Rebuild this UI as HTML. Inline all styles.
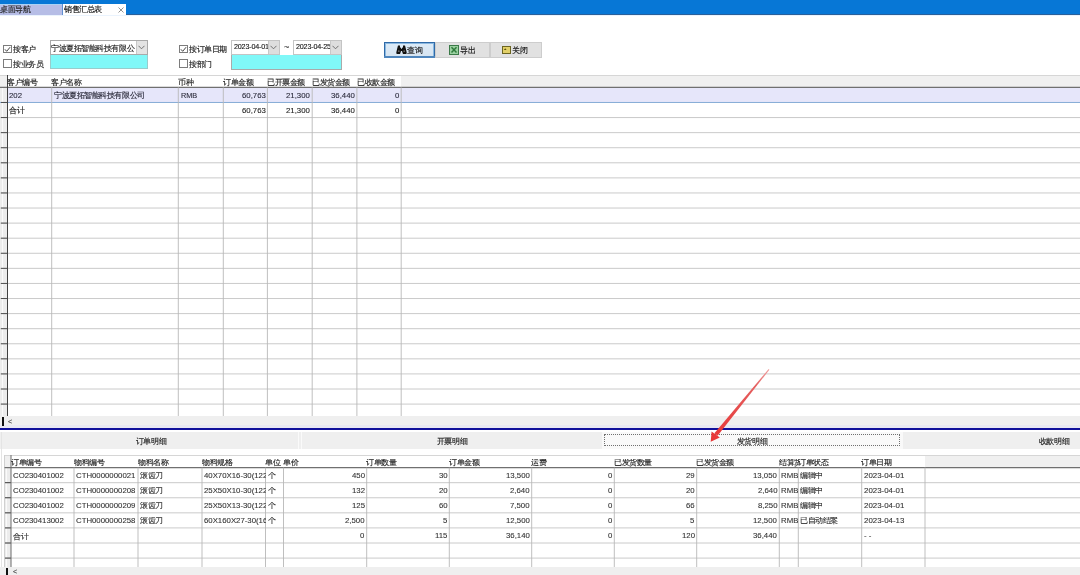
<!DOCTYPE html><html><head><meta charset="utf-8"><style>
html,body{margin:0;padding:0;width:1080px;height:575px;overflow:hidden;background:#fff;position:relative}
body{font-family:"Liberation Sans",sans-serif;color:#222}
div,span,svg{position:absolute}
.t{white-space:nowrap;line-height:1;will-change:transform;-webkit-text-stroke:0.15px currentColor}
.c{font-size:8px;letter-spacing:-0.45px}
.l{font-size:7.8px;-webkit-text-stroke:0.1px currentColor}
</style></head><body>
<div style="left:0px;top:0px;width:1080px;height:15px;background:#0777d6"></div>
<div style="left:0px;top:14px;width:1080px;height:1px;background:#2a609a"></div>
<div style="left:0px;top:15px;width:1080px;height:1px;background:#eaf3fd"></div>
<div style="left:0px;top:3.5px;width:62px;height:11px;background:#b6bde6"></div>
<div style="left:0px;top:3.5px;width:62px;height:1px;background:#a9d2f5"></div>
<div style="left:62px;top:3.5px;width:1px;height:11px;background:#5f8fd0"></div>
<span class="t c" style="left:-0.5px;top:6.40px;color:#222">桌面导航</span>
<div style="left:63px;top:3.5px;width:63px;height:11px;background:#fff"></div>
<span class="t c" style="left:64px;top:6.40px;color:#111">销售汇总表</span>
<svg style="position:absolute;left:118px;top:6.5px" width="6" height="6"><path d="M0.5 0.5 L5.5 5.5 M5.5 0.5 L0.5 5.5" stroke="#777" stroke-width="0.8"/></svg>
<div style="left:3.3px;top:44.8px;width:6.5px;height:6.5px;border:1px solid #7c7c7c;background:#fff"></div>
<svg style="position:absolute;left:3.3px;top:44.8px" width="9" height="9"><path d="M1.9 4.3 L3.7 6.3 L7.1 2.2" stroke="#444" stroke-width="1" fill="none"/></svg>
<span class="t c" style="left:12.5px;top:45.90px;">按客户</span>
<div style="left:3.3px;top:59.3px;width:6.5px;height:6.5px;border:1px solid #7c7c7c;background:#fff"></div>
<span class="t c" style="left:12.5px;top:60.50px;">按业务员</span>
<div style="left:50px;top:40px;width:98px;height:15px;background:#fff;border:1px solid #a9a9a9;box-sizing:border-box"></div>
<span class="t c" style="left:50.8px;top:44.55px;">宁波夏拓智能科技有限公</span>
<div style="left:136px;top:41px;width:11px;height:13px;background:#e3e3e3;border-left:1px solid #c8c8c8;box-sizing:border-box"></div>
<svg style="position:absolute;left:138px;top:45px" width="7" height="5"><path d="M0.5 0.8 L3.5 3.8 L6.5 0.8" stroke="#666" stroke-width="0.9" fill="none"/></svg>
<div style="left:50px;top:55px;width:98px;height:14px;background:#80f8f8;border:1px solid #9cc;border-top:none;box-sizing:border-box"></div>
<div style="left:179.3px;top:44.8px;width:6.5px;height:6.5px;border:1px solid #7c7c7c;background:#fff"></div>
<svg style="position:absolute;left:179.3px;top:44.8px" width="9" height="9"><path d="M1.9 4.3 L3.7 6.3 L7.1 2.2" stroke="#444" stroke-width="1" fill="none"/></svg>
<span class="t c" style="left:189px;top:45.90px;">按订单日期</span>
<div style="left:179.3px;top:59.3px;width:6.5px;height:6.5px;border:1px solid #7c7c7c;background:#fff"></div>
<span class="t c" style="left:189px;top:60.50px;">按部门</span>
<div style="left:230.5px;top:40px;width:49px;height:15px;background:#fff;border:1px solid #c4c4c4;box-sizing:border-box"></div>
<span class="t l" style="left:233.5px;top:43.40px;font-size:7.2px;color:#111;letter-spacing:-0.2px">2023-04-01</span>
<div style="left:267.5px;top:41px;width:11px;height:13px;background:#dedede;border-left:1px solid #c8c8c8;box-sizing:border-box"></div>
<svg style="position:absolute;left:269.5px;top:45px" width="7" height="5"><path d="M0.5 0.8 L3.5 3.8 L6.5 0.8" stroke="#666" stroke-width="0.9" fill="none"/></svg>
<span class="t l" style="left:283.5px;top:42.90px;font-size:9px;color:#333">~</span>
<div style="left:292.5px;top:40px;width:49px;height:15px;background:#fff;border:1px solid #c4c4c4;box-sizing:border-box"></div>
<span class="t l" style="left:295.5px;top:43.40px;font-size:7.2px;color:#111;letter-spacing:-0.2px">2023-04-25</span>
<div style="left:329.5px;top:41px;width:11px;height:13px;background:#dedede;border-left:1px solid #c8c8c8;box-sizing:border-box"></div>
<svg style="position:absolute;left:331.5px;top:45px" width="7" height="5"><path d="M0.5 0.8 L3.5 3.8 L6.5 0.8" stroke="#666" stroke-width="0.9" fill="none"/></svg>
<div style="left:230.5px;top:55px;width:111px;height:15px;background:#80f8f8;border:1px solid #aaa;border-top:none;box-sizing:border-box"></div>
<div style="left:384px;top:42px;width:51px;height:16px;background:linear-gradient(#dcebf8,#d6e4f0);border:1px solid #2f6aa8;box-shadow:inset 0 0 0 1px #8ab8e0;box-sizing:border-box"></div>
<div style="left:384px;top:56px;width:51px;height:2px;background:#4f86bd"></div>
<svg style="position:absolute;left:396px;top:45px" width="11" height="9"><path d="M2 0.5 h2 v2 l1 0.3 v1 h1 v-1 l1 -0.3 v-2 h2 l0.8 3 L10.6 7 a2 2 0 0 1 -4 1 L6 6 h-1 l-0.6 2 a2 2 0 0 1 -4 -1 L1.2 3.5 Z" fill="#111"/><circle cx="2.8" cy="6.2" r="0.9" fill="#666"/><circle cx="8.2" cy="6.2" r="0.9" fill="#666"/></svg>
<span class="t c" style="left:407px;top:46.60px;color:#111">查询</span>
<div style="left:435px;top:42px;width:55px;height:16px;background:#e1e1e1;border:1px solid #cdcdcd;box-sizing:border-box"></div>
<svg style="position:absolute;left:449px;top:44.5px" width="10" height="10"><rect x="0.5" y="0.5" width="9" height="9" fill="#9ad0a0" stroke="#3b7a48" stroke-width="1"/><path d="M2.5 2.3 L7.5 7.6 M7.5 2.3 L2.5 7.6" stroke="#2f7a3c" stroke-width="1.5"/></svg>
<span class="t c" style="left:460px;top:46.60px;color:#111">导出</span>
<div style="left:489.5px;top:42px;width:52px;height:16px;background:#e1e1e1;border:1px solid #cdcdcd;box-sizing:border-box"></div>
<svg style="position:absolute;left:502px;top:45.5px" width="9" height="8"><rect x="0.5" y="0.5" width="8" height="7" fill="#e2d068" stroke="#6b6420" stroke-width="1"/><path d="M1.8 4 L3.2 2.2 L4.6 4 Z" fill="#5a5010"/></svg>
<span class="t c" style="left:512px;top:46.60px;color:#111">关闭</span>
<div style="left:0px;top:75px;width:1080px;height:12.400000000000006px;background:#f0f0f0;border-top:1px solid #d6d6d6;box-sizing:border-box"></div>
<div style="left:7px;top:75px;width:394px;height:12.400000000000006px;background:#fff;border-top:1px solid #d6d6d6;box-sizing:border-box"></div>
<div style="left:7px;top:87.4px;width:1073px;height:15.08px;background:#e6e6fa"></div>
<div style="left:0px;top:87.4px;width:7px;height:328.6px;background:#ececec"></div>
<div style="left:1.5px;top:87.4px;width:1px;height:328.6px;background:#fafafa"></div>
<svg style="position:absolute;left:0;top:0" width="1080" height="575"><line x1="0" y1="87.4" x2="1080" y2="87.4" stroke="#707070" stroke-width="1.1"/><line x1="0" y1="102.48" x2="1080" y2="102.48" stroke="#86acd6" stroke-width="1.0"/><line x1="1" y1="102.48" x2="7.5" y2="102.48" stroke="#505050" stroke-width="1.0"/><line x1="0" y1="117.56" x2="1080" y2="117.56" stroke="#c4c4c4" stroke-width="0.9"/><line x1="1" y1="117.56" x2="7.5" y2="117.56" stroke="#505050" stroke-width="1.0"/><line x1="0" y1="132.64000000000001" x2="1080" y2="132.64000000000001" stroke="#c4c4c4" stroke-width="0.9"/><line x1="1" y1="132.64000000000001" x2="7.5" y2="132.64000000000001" stroke="#505050" stroke-width="1.0"/><line x1="0" y1="147.72000000000003" x2="1080" y2="147.72000000000003" stroke="#c4c4c4" stroke-width="0.9"/><line x1="1" y1="147.72000000000003" x2="7.5" y2="147.72000000000003" stroke="#505050" stroke-width="1.0"/><line x1="0" y1="162.80000000000004" x2="1080" y2="162.80000000000004" stroke="#c4c4c4" stroke-width="0.9"/><line x1="1" y1="162.80000000000004" x2="7.5" y2="162.80000000000004" stroke="#505050" stroke-width="1.0"/><line x1="0" y1="177.88000000000005" x2="1080" y2="177.88000000000005" stroke="#c4c4c4" stroke-width="0.9"/><line x1="1" y1="177.88000000000005" x2="7.5" y2="177.88000000000005" stroke="#505050" stroke-width="1.0"/><line x1="0" y1="192.96000000000006" x2="1080" y2="192.96000000000006" stroke="#c4c4c4" stroke-width="0.9"/><line x1="1" y1="192.96000000000006" x2="7.5" y2="192.96000000000006" stroke="#505050" stroke-width="1.0"/><line x1="0" y1="208.04000000000008" x2="1080" y2="208.04000000000008" stroke="#c4c4c4" stroke-width="0.9"/><line x1="1" y1="208.04000000000008" x2="7.5" y2="208.04000000000008" stroke="#505050" stroke-width="1.0"/><line x1="0" y1="223.1200000000001" x2="1080" y2="223.1200000000001" stroke="#c4c4c4" stroke-width="0.9"/><line x1="1" y1="223.1200000000001" x2="7.5" y2="223.1200000000001" stroke="#505050" stroke-width="1.0"/><line x1="0" y1="238.2000000000001" x2="1080" y2="238.2000000000001" stroke="#c4c4c4" stroke-width="0.9"/><line x1="1" y1="238.2000000000001" x2="7.5" y2="238.2000000000001" stroke="#505050" stroke-width="1.0"/><line x1="0" y1="253.28000000000011" x2="1080" y2="253.28000000000011" stroke="#c4c4c4" stroke-width="0.9"/><line x1="1" y1="253.28000000000011" x2="7.5" y2="253.28000000000011" stroke="#505050" stroke-width="1.0"/><line x1="0" y1="268.3600000000001" x2="1080" y2="268.3600000000001" stroke="#c4c4c4" stroke-width="0.9"/><line x1="1" y1="268.3600000000001" x2="7.5" y2="268.3600000000001" stroke="#505050" stroke-width="1.0"/><line x1="0" y1="283.4400000000001" x2="1080" y2="283.4400000000001" stroke="#c4c4c4" stroke-width="0.9"/><line x1="1" y1="283.4400000000001" x2="7.5" y2="283.4400000000001" stroke="#505050" stroke-width="1.0"/><line x1="0" y1="298.5200000000001" x2="1080" y2="298.5200000000001" stroke="#c4c4c4" stroke-width="0.9"/><line x1="1" y1="298.5200000000001" x2="7.5" y2="298.5200000000001" stroke="#505050" stroke-width="1.0"/><line x1="0" y1="313.6000000000001" x2="1080" y2="313.6000000000001" stroke="#c4c4c4" stroke-width="0.9"/><line x1="1" y1="313.6000000000001" x2="7.5" y2="313.6000000000001" stroke="#505050" stroke-width="1.0"/><line x1="0" y1="328.68000000000006" x2="1080" y2="328.68000000000006" stroke="#c4c4c4" stroke-width="0.9"/><line x1="1" y1="328.68000000000006" x2="7.5" y2="328.68000000000006" stroke="#505050" stroke-width="1.0"/><line x1="0" y1="343.76000000000005" x2="1080" y2="343.76000000000005" stroke="#c4c4c4" stroke-width="0.9"/><line x1="1" y1="343.76000000000005" x2="7.5" y2="343.76000000000005" stroke="#505050" stroke-width="1.0"/><line x1="0" y1="358.84000000000003" x2="1080" y2="358.84000000000003" stroke="#c4c4c4" stroke-width="0.9"/><line x1="1" y1="358.84000000000003" x2="7.5" y2="358.84000000000003" stroke="#505050" stroke-width="1.0"/><line x1="0" y1="373.92" x2="1080" y2="373.92" stroke="#c4c4c4" stroke-width="0.9"/><line x1="1" y1="373.92" x2="7.5" y2="373.92" stroke="#505050" stroke-width="1.0"/><line x1="0" y1="389.0" x2="1080" y2="389.0" stroke="#c4c4c4" stroke-width="0.9"/><line x1="1" y1="389.0" x2="7.5" y2="389.0" stroke="#505050" stroke-width="1.0"/><line x1="0" y1="404.08" x2="1080" y2="404.08" stroke="#c4c4c4" stroke-width="0.9"/><line x1="1" y1="404.08" x2="7.5" y2="404.08" stroke="#505050" stroke-width="1.0"/><line x1="51.7" y1="87.4" x2="51.7" y2="416" stroke="#b8b8b8" stroke-width="0.9"/><line x1="178.3" y1="87.4" x2="178.3" y2="416" stroke="#b8b8b8" stroke-width="0.9"/><line x1="223.3" y1="87.4" x2="223.3" y2="416" stroke="#b8b8b8" stroke-width="0.9"/><line x1="267.4" y1="87.4" x2="267.4" y2="416" stroke="#b8b8b8" stroke-width="0.9"/><line x1="312.2" y1="87.4" x2="312.2" y2="416" stroke="#b8b8b8" stroke-width="0.9"/><line x1="356.9" y1="87.4" x2="356.9" y2="416" stroke="#b8b8b8" stroke-width="0.9"/><line x1="401.2" y1="87.4" x2="401.2" y2="416" stroke="#b8b8b8" stroke-width="0.9"/><line x1="7.5" y1="75" x2="7.5" y2="416" stroke="#404040" stroke-width="1.0"/></svg>
<span class="t c" style="left:7.2px;top:78.50px;">客户编号</span>
<span class="t c" style="left:51.400000000000006px;top:78.50px;">客户名称</span>
<span class="t c" style="left:178.0px;top:78.50px;">币种</span>
<span class="t c" style="left:223.0px;top:78.50px;">订单金额</span>
<span class="t c" style="left:267.09999999999997px;top:78.50px;">已开票金额</span>
<span class="t c" style="left:311.9px;top:78.50px;">已发货金额</span>
<span class="t c" style="left:356.59999999999997px;top:78.50px;">已收款金额</span>
<span class="t l" style="left:9px;top:91.54px;color:#2a2a3a">202</span>
<span class="t c" style="left:54px;top:91.94px;color:#2a2a3a">宁波夏拓智能科技有限公司</span>
<span class="t l" style="left:180.5px;top:91.54px;color:#2a2a3a;font-size:7.3px">RMB</span>
<span class="t l" style="right:814.6px;top:91.54px;color:#2a2a3a">60,763</span>
<span class="t l" style="right:769.8px;top:91.54px;color:#2a2a3a">21,300</span>
<span class="t l" style="right:725.1px;top:91.54px;color:#2a2a3a">36,440</span>
<span class="t l" style="right:680.8px;top:91.54px;color:#2a2a3a">0</span>
<span class="t c" style="left:9px;top:107.02px;">合计</span>
<span class="t l" style="right:814.6px;top:106.62px;">60,763</span>
<span class="t l" style="right:769.8px;top:106.62px;">21,300</span>
<span class="t l" style="right:725.1px;top:106.62px;">36,440</span>
<span class="t l" style="right:680.8px;top:106.62px;">0</span>
<div style="left:0px;top:416px;width:1080px;height:12px;background:#efefef"></div>
<div style="left:0px;top:425px;width:1080px;height:3px;background:#e8e8f2"></div>
<div style="left:2px;top:417px;width:2px;height:9px;background:#111"></div>
<span class="t l" style="left:8px;top:417.60px;font-size:7px;color:#333"><</span>
<div style="left:0px;top:427.6px;width:1080px;height:2.4px;background:#10109a"></div>
<div style="left:0px;top:430px;width:1080px;height:20px;background:#fff"></div>
<div style="left:0px;top:431.5px;width:1080px;height:17px;background:#efefef"></div>
<div style="left:602px;top:431.5px;width:301px;height:17px;background:#f9f9f9"></div>
<div style="left:298px;top:431.5px;width:1px;height:17px;background:#fafafa"></div>
<div style="left:301px;top:431.5px;width:1px;height:17px;background:#fafafa"></div>
<div style="left:604px;top:434px;width:296px;height:12px;border:1px dotted #707070;box-sizing:border-box"></div>
<span class="t c" style="left:50.5px;width:200px;text-align:center;top:438.20px;">订单明细</span>
<span class="t c" style="left:351.5px;width:200px;text-align:center;top:438.20px;">开票明细</span>
<span class="t c" style="left:651.5px;width:200px;text-align:center;top:438.20px;">发货明细</span>
<span class="t c" style="left:953.5px;width:200px;text-align:center;top:438.20px;">收款明细</span>
<div style="left:0px;top:450px;width:1080px;height:5.5px;background:#fff"></div>
<div style="left:0px;top:455px;width:1080px;height:112px;background:#fff"></div>
<div style="left:4.5px;top:455px;width:1075.5px;height:12.600000000000023px;background:#f0f0f0;border-top:1px solid #d6d6d6;box-sizing:border-box"></div>
<div style="left:11px;top:455px;width:914px;height:12.600000000000023px;background:#fff;border-top:1px solid #d6d6d6;box-sizing:border-box"></div>
<div style="left:4.5px;top:467.6px;width:6.5px;height:99.39999999999998px;background:#ececec"></div>
<div style="left:6px;top:467.6px;width:1px;height:99.39999999999998px;background:#fafafa"></div>
<div style="left:4px;top:455px;width:1px;height:112px;background:#d0d0d0"></div>
<div style="left:1px;top:431.5px;width:1px;height:143.5px;background:#e4e4e4"></div>
<svg style="position:absolute;left:0;top:0" width="1080" height="575"><line x1="4.5" y1="467.6" x2="1080" y2="467.6" stroke="#707070" stroke-width="1.1"/><line x1="4.5" y1="482.68" x2="1080" y2="482.68" stroke="#c4c4c4" stroke-width="0.9"/><line x1="5" y1="482.68" x2="11" y2="482.68" stroke="#404040" stroke-width="1.0"/><line x1="4.5" y1="497.76" x2="1080" y2="497.76" stroke="#c4c4c4" stroke-width="0.9"/><line x1="5" y1="497.76" x2="11" y2="497.76" stroke="#404040" stroke-width="1.0"/><line x1="4.5" y1="512.84" x2="1080" y2="512.84" stroke="#c4c4c4" stroke-width="0.9"/><line x1="5" y1="512.84" x2="11" y2="512.84" stroke="#404040" stroke-width="1.0"/><line x1="4.5" y1="527.9200000000001" x2="1080" y2="527.9200000000001" stroke="#c4c4c4" stroke-width="0.9"/><line x1="5" y1="527.9200000000001" x2="11" y2="527.9200000000001" stroke="#404040" stroke-width="1.0"/><line x1="4.5" y1="543.0000000000001" x2="1080" y2="543.0000000000001" stroke="#c4c4c4" stroke-width="0.9"/><line x1="5" y1="543.0000000000001" x2="11" y2="543.0000000000001" stroke="#404040" stroke-width="1.0"/><line x1="4.5" y1="558.0800000000002" x2="1080" y2="558.0800000000002" stroke="#c4c4c4" stroke-width="0.9"/><line x1="5" y1="558.0800000000002" x2="11" y2="558.0800000000002" stroke="#404040" stroke-width="1.0"/><line x1="74" y1="467.6" x2="74" y2="567" stroke="#b8b8b8" stroke-width="0.9"/><line x1="138" y1="467.6" x2="138" y2="567" stroke="#b8b8b8" stroke-width="0.9"/><line x1="202" y1="467.6" x2="202" y2="567" stroke="#b8b8b8" stroke-width="0.9"/><line x1="265.5" y1="467.6" x2="265.5" y2="567" stroke="#b8b8b8" stroke-width="0.9"/><line x1="283.5" y1="467.6" x2="283.5" y2="567" stroke="#b8b8b8" stroke-width="0.9"/><line x1="366.7" y1="467.6" x2="366.7" y2="567" stroke="#b8b8b8" stroke-width="0.9"/><line x1="449.3" y1="467.6" x2="449.3" y2="567" stroke="#b8b8b8" stroke-width="0.9"/><line x1="531.7" y1="467.6" x2="531.7" y2="567" stroke="#b8b8b8" stroke-width="0.9"/><line x1="614.3" y1="467.6" x2="614.3" y2="567" stroke="#b8b8b8" stroke-width="0.9"/><line x1="696.7" y1="467.6" x2="696.7" y2="567" stroke="#b8b8b8" stroke-width="0.9"/><line x1="779.3" y1="467.6" x2="779.3" y2="567" stroke="#b8b8b8" stroke-width="0.9"/><line x1="798.3" y1="467.6" x2="798.3" y2="567" stroke="#b8b8b8" stroke-width="0.9"/><line x1="861.7" y1="467.6" x2="861.7" y2="567" stroke="#b8b8b8" stroke-width="0.9"/><line x1="925" y1="467.6" x2="925" y2="567" stroke="#b8b8b8" stroke-width="0.9"/><line x1="11" y1="455" x2="11" y2="567" stroke="#6a6a6a" stroke-width="1.0"/></svg>
<span class="t c" style="left:10.5px;top:458.60px;width:200px;overflow:hidden">订单编号</span>
<span class="t c" style="left:73.5px;top:458.60px;width:200px;overflow:hidden">物料编号</span>
<span class="t c" style="left:137.5px;top:458.60px;width:200px;overflow:hidden">物料名称</span>
<span class="t c" style="left:201.5px;top:458.60px;width:200px;overflow:hidden">物料规格</span>
<span class="t c" style="left:265.0px;top:458.60px;width:200px;overflow:hidden">单位</span>
<span class="t c" style="left:283.0px;top:458.60px;width:200px;overflow:hidden">单价</span>
<span class="t c" style="left:366.2px;top:458.60px;width:200px;overflow:hidden">订单数量</span>
<span class="t c" style="left:448.8px;top:458.60px;width:200px;overflow:hidden">订单金额</span>
<span class="t c" style="left:531.2px;top:458.60px;width:200px;overflow:hidden">运费</span>
<span class="t c" style="left:613.8px;top:458.60px;width:200px;overflow:hidden">已发货数量</span>
<span class="t c" style="left:696.2px;top:458.60px;width:200px;overflow:hidden">已发货金额</span>
<span class="t c" style="left:778.8px;top:458.60px;width:19.5px;overflow:hidden">结算货</span>
<span class="t c" style="left:797.8px;top:458.60px;width:200px;overflow:hidden">订单状态</span>
<span class="t c" style="left:861.2px;top:458.60px;width:200px;overflow:hidden">订单日期</span>
<span class="t l" style="left:13px;top:471.79px;width:61px;overflow:hidden;color:#333;">CO230401002</span>
<span class="t l" style="left:76px;top:471.79px;width:62px;overflow:hidden;color:#333;">CTH0000000021</span>
<span class="t c" style="left:140px;top:472.19px;width:62px;overflow:hidden;color:#333;">滚齿刀</span>
<span class="t l" style="left:204px;top:471.79px;width:61.5px;overflow:hidden;color:#333;">40X70X16-30(122</span>
<span class="t c" style="left:267.5px;top:472.19px;width:16.0px;overflow:hidden;color:#333;">个</span>
<span class="t l" style="right:715.3px;top:471.79px;color:#333">450</span>
<span class="t l" style="right:632.7px;top:471.79px;color:#333">30</span>
<span class="t l" style="right:550.3px;top:471.79px;color:#333">13,500</span>
<span class="t l" style="right:467.70000000000005px;top:471.79px;color:#333">0</span>
<span class="t l" style="right:385.29999999999995px;top:471.79px;color:#333">29</span>
<span class="t l" style="right:302.70000000000005px;top:471.79px;color:#333">13,050</span>
<span class="t l" style="left:781.3px;top:471.79px;width:17.0px;overflow:hidden;color:#333;">RMB</span>
<span class="t c" style="left:800.3px;top:472.19px;width:61.40000000000009px;overflow:hidden;color:#333;">编辑中</span>
<span class="t l" style="left:863.7px;top:471.79px;width:61.299999999999955px;overflow:hidden;color:#333;font-size:7.9px;">2023-04-01</span>
<span class="t l" style="left:13px;top:486.87px;width:61px;overflow:hidden;color:#333;">CO230401002</span>
<span class="t l" style="left:76px;top:486.87px;width:62px;overflow:hidden;color:#333;">CTH0000000208</span>
<span class="t c" style="left:140px;top:487.27px;width:62px;overflow:hidden;color:#333;">滚齿刀</span>
<span class="t l" style="left:204px;top:486.87px;width:61.5px;overflow:hidden;color:#333;">25X50X10-30(122</span>
<span class="t c" style="left:267.5px;top:487.27px;width:16.0px;overflow:hidden;color:#333;">个</span>
<span class="t l" style="right:715.3px;top:486.87px;color:#333">132</span>
<span class="t l" style="right:632.7px;top:486.87px;color:#333">20</span>
<span class="t l" style="right:550.3px;top:486.87px;color:#333">2,640</span>
<span class="t l" style="right:467.70000000000005px;top:486.87px;color:#333">0</span>
<span class="t l" style="right:385.29999999999995px;top:486.87px;color:#333">20</span>
<span class="t l" style="right:302.70000000000005px;top:486.87px;color:#333">2,640</span>
<span class="t l" style="left:781.3px;top:486.87px;width:17.0px;overflow:hidden;color:#333;">RMB</span>
<span class="t c" style="left:800.3px;top:487.27px;width:61.40000000000009px;overflow:hidden;color:#333;">编辑中</span>
<span class="t l" style="left:863.7px;top:486.87px;width:61.299999999999955px;overflow:hidden;color:#333;font-size:7.9px;">2023-04-01</span>
<span class="t l" style="left:13px;top:501.95px;width:61px;overflow:hidden;color:#333;">CO230401002</span>
<span class="t l" style="left:76px;top:501.95px;width:62px;overflow:hidden;color:#333;">CTH0000000209</span>
<span class="t c" style="left:140px;top:502.35px;width:62px;overflow:hidden;color:#333;">滚齿刀</span>
<span class="t l" style="left:204px;top:501.95px;width:61.5px;overflow:hidden;color:#333;">25X50X13-30(122</span>
<span class="t c" style="left:267.5px;top:502.35px;width:16.0px;overflow:hidden;color:#333;">个</span>
<span class="t l" style="right:715.3px;top:501.95px;color:#333">125</span>
<span class="t l" style="right:632.7px;top:501.95px;color:#333">60</span>
<span class="t l" style="right:550.3px;top:501.95px;color:#333">7,500</span>
<span class="t l" style="right:467.70000000000005px;top:501.95px;color:#333">0</span>
<span class="t l" style="right:385.29999999999995px;top:501.95px;color:#333">66</span>
<span class="t l" style="right:302.70000000000005px;top:501.95px;color:#333">8,250</span>
<span class="t l" style="left:781.3px;top:501.95px;width:17.0px;overflow:hidden;color:#333;">RMB</span>
<span class="t c" style="left:800.3px;top:502.35px;width:61.40000000000009px;overflow:hidden;color:#333;">编辑中</span>
<span class="t l" style="left:863.7px;top:501.95px;width:61.299999999999955px;overflow:hidden;color:#333;font-size:7.9px;">2023-04-01</span>
<span class="t l" style="left:13px;top:517.03px;width:61px;overflow:hidden;color:#333;">CO230413002</span>
<span class="t l" style="left:76px;top:517.03px;width:62px;overflow:hidden;color:#333;">CTH0000000258</span>
<span class="t c" style="left:140px;top:517.43px;width:62px;overflow:hidden;color:#333;">滚齿刀</span>
<span class="t l" style="left:204px;top:517.03px;width:61.5px;overflow:hidden;color:#333;">60X160X27-30(16</span>
<span class="t c" style="left:267.5px;top:517.43px;width:16.0px;overflow:hidden;color:#333;">个</span>
<span class="t l" style="right:715.3px;top:517.03px;color:#333">2,500</span>
<span class="t l" style="right:632.7px;top:517.03px;color:#333">5</span>
<span class="t l" style="right:550.3px;top:517.03px;color:#333">12,500</span>
<span class="t l" style="right:467.70000000000005px;top:517.03px;color:#333">0</span>
<span class="t l" style="right:385.29999999999995px;top:517.03px;color:#333">5</span>
<span class="t l" style="right:302.70000000000005px;top:517.03px;color:#333">12,500</span>
<span class="t l" style="left:781.3px;top:517.03px;width:17.0px;overflow:hidden;color:#333;">RMB</span>
<span class="t c" style="left:800.3px;top:517.43px;width:61.40000000000009px;overflow:hidden;color:#333;">已自动结案</span>
<span class="t l" style="left:863.7px;top:517.03px;width:61.299999999999955px;overflow:hidden;color:#333;font-size:7.9px;">2023-04-13</span>
<span class="t c" style="left:13px;top:532.51px;width:61px;overflow:hidden;color:#333;">合计</span>
<span class="t l" style="right:715.3px;top:532.11px;color:#333">0</span>
<span class="t l" style="right:632.7px;top:532.11px;color:#333">115</span>
<span class="t l" style="right:550.3px;top:532.11px;color:#333">36,140</span>
<span class="t l" style="right:467.70000000000005px;top:532.11px;color:#333">0</span>
<span class="t l" style="right:385.29999999999995px;top:532.11px;color:#333">120</span>
<span class="t l" style="right:302.70000000000005px;top:532.11px;color:#333">36,440</span>
<span class="t l" style="left:863.7px;top:532.11px;width:61.299999999999955px;overflow:hidden;color:#333;font-size:7.9px;">- -</span>
<div style="left:0px;top:567px;width:1080px;height:8px;background:#efefef"></div>
<div style="left:5.8px;top:568px;width:2px;height:7px;background:#111"></div>
<span class="t l" style="left:12.5px;top:568.40px;font-size:7px;color:#333"><</span>
<svg style="position:absolute;left:0;top:0" width="1080" height="575"><defs><linearGradient id="ag" x1="769" y1="369" x2="716" y2="434" gradientUnits="userSpaceOnUse"><stop offset="0" stop-color="#f0a0a0"/><stop offset="0.25" stop-color="#e46060"/><stop offset="1" stop-color="#e83838"/></linearGradient></defs><path d="M769.4 369.7 L768.6 369.1 L714.4 433.2 L717.6 435.8 Z" fill="url(#ag)"/><path d="M710.7 441.8 L711.6 431.6 L719.8 437.6 Z" fill="#e83838"/></svg>
</body></html>
